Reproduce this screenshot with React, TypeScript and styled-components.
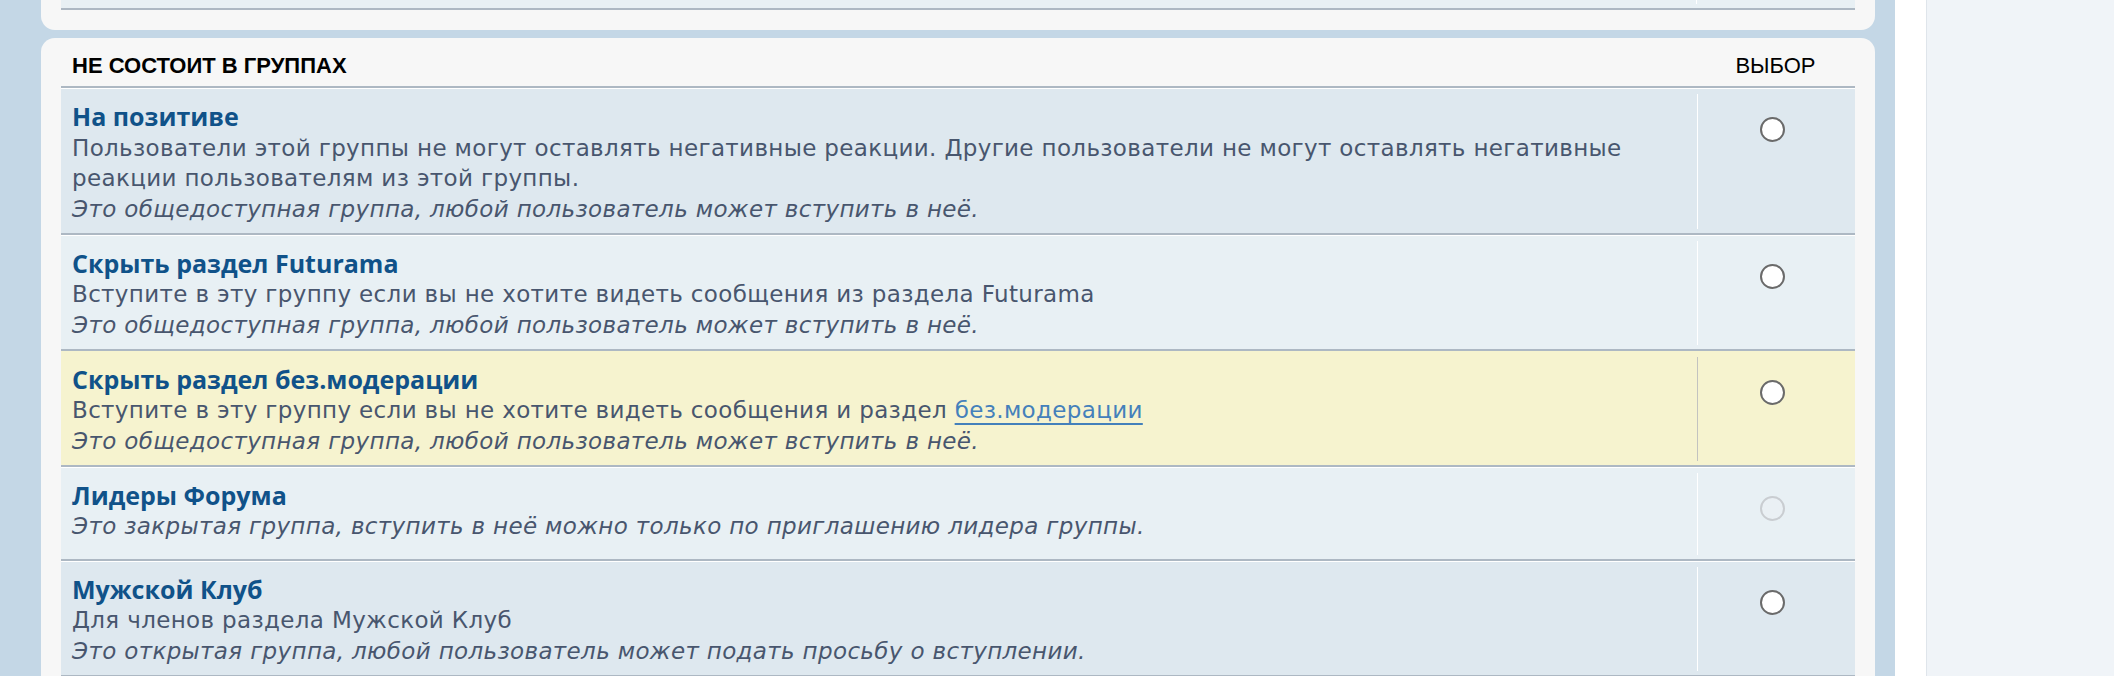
import React from 'react';
import styled, { createGlobalStyle } from 'styled-components';

const Global = createGlobalStyle`
  html, body { margin: 0; padding: 0; }
  body { background: #ffffff; font-family: "DejaVu Sans", Verdana, sans-serif; }
`;

const Page = styled.div`
  display: flex;
  width: 2114px;
  height: 676px;
  overflow: hidden;
`;

const Main = styled.div`
  width: 1895px;
  flex: none;
  box-sizing: border-box;
  background: #c4d7e6;
  padding: 0 20px 0 41px;
  display: flex;
  flex-direction: column;
  gap: 8px;
`;

const Gutter = styled.div`
  width: 31px;
  flex: none;
  background: #ffffff;
`;

const Sidebar = styled.aside`
  flex: 1;
  background: #f0f4f8;
  border-left: 1px solid #dfe5eb;
`;

const Panel = styled.section<{ $top?: boolean }>`
  background: #f7f7f7;
  padding: ${p => (p.$top ? '0 20px 20px' : '0 20px')};
  border-radius: ${p => (p.$top ? '0 0 14px 14px' : '14px 14px 0 0')};
  flex: ${p => (p.$top ? 'none' : '1')};
`;

const StubRow = styled.div`
  display: flex;
  height: 8px;
  background: #e8f0f4;
  border-bottom: 2px solid #adb8c3;
`;

const StubCell = styled.div`
  margin-left: auto;
  width: 158px;
  margin-bottom: 4px;
  border-left: 1px solid #ffffff;
`;

const Header = styled.div`
  display: flex;
  padding-top: 8px;
  height: 40px;
  line-height: 40px;
  border-bottom: 2px solid #adb8c3;
  font-family: "Liberation Sans", Arial, sans-serif;
  font-size: 22px;
  color: #000000;
  text-transform: uppercase;
`;

const HeaderTitle = styled.div`
  flex: 1;
  padding-left: 11px;
  font-weight: bold;
`;

const HeaderChoice = styled.div`
  width: 159px;
  text-align: center;
`;

const List = styled.ul`
  list-style: none;
  margin: 0;
  padding: 0;
`;

const Row = styled.li<{ $bg: string; $hover?: boolean }>`
  display: flex;
  background: ${p => p.$bg};
  border-top: 1px solid ${p => (p.$hover ? p.$bg : '#ffffff')};
  border-bottom: 2px solid #adb8c3;
`;

const Info = styled.div`
  flex: 1;
  padding: 14px 11px 8.5px;
  color: #48566e;
  font-size: 23px;
  letter-spacing: 0.35px;
  line-height: 30.5px;
`;

const Title = styled.a`
  display: block;
  margin-bottom: 2.5px;
  font-family: "Open Sans", "Liberation Sans", sans-serif;
  font-weight: 700;
  font-size: 25px;
  letter-spacing: 0;
  line-height: 27px;
  color: #105289;
  text-decoration: none;
`;

const Desc = styled.div``;

const Note = styled.div`
  font-style: italic;
`;

const Link = styled.a`
  color: #4480bb;
  text-decoration: underline;
  text-decoration-thickness: 2px;
  text-underline-offset: 5px;
`;

const Choice = styled.div<{ $hover?: boolean }>`
  width: 158px;
  box-sizing: border-box;
  min-height: 82px;
  margin: 5px 0 4px;
  padding: 23px 8px 0 0;
  border-left: 1px solid ${p => (p.$hover ? '#c3c3c0' : '#ffffff')};
  display: flex;
  justify-content: center;
  align-items: flex-start;
`;

const Radio = styled.input`
  appearance: none;
  margin: 0;
  width: 25px;
  height: 25px;
  border-radius: 50%;
  box-sizing: border-box;
  border: 2px solid #6a6a6a;
  background: #ffffff;
  &:disabled {
    border-color: #c9cdd1;
    background: #eaf0f4;
  }
`;

type Group = {
  title: string;
  desc?: React.ReactNode;
  note: string;
  bg: string;
  hover?: boolean;
  disabled?: boolean;
};

const PUBLIC = 'Это общедоступная группа, любой пользователь может вступить в неё.';

const groups: Group[] = [
  {
    title: 'На позитиве',
    desc: 'Пользователи этой группы не могут оставлять негативные реакции. Другие пользователи не могут оставлять негативные реакции пользователям из этой группы.',
    note: PUBLIC,
    bg: '#dee8ef',
  },
  {
    title: 'Скрыть раздел Futurama',
    desc: 'Вступите в эту группу если вы не хотите видеть сообщения из раздела Futurama',
    note: PUBLIC,
    bg: '#e8f0f4',
  },
  {
    title: 'Скрыть раздел без.модерации',
    desc: (
      <>
        Вступите в эту группу если вы не хотите видеть сообщения и раздел <Link href="#">без.модерации</Link>
      </>
    ),
    note: PUBLIC,
    bg: '#f6f3cf',
    hover: true,
  },
  {
    title: 'Лидеры Форума',
    note: 'Это закрытая группа, вступить в неё можно только по приглашению лидера группы.',
    bg: '#e8f0f4',
    disabled: true,
  },
  {
    title: 'Мужской Клуб',
    desc: 'Для членов раздела Мужской Клуб',
    note: 'Это открытая группа, любой пользователь может подать просьбу о вступлении.',
    bg: '#dee8ef',
  },
];

export default function App() {
  return (
    <>
      <Global />
      <Page>
        <Main>
          <Panel $top>
            <StubRow>
              <StubCell />
            </StubRow>
          </Panel>
          <Panel>
            <Header>
              <HeaderTitle>Не состоит в группах</HeaderTitle>
              <HeaderChoice>Выбор</HeaderChoice>
            </Header>
            <List>
              {groups.map(g => (
                <Row key={g.title} $bg={g.bg} $hover={g.hover}>
                  <Info>
                    <Title href="#">{g.title}</Title>
                    {g.desc && <Desc>{g.desc}</Desc>}
                    <Note>{g.note}</Note>
                  </Info>
                  <Choice $hover={g.hover}>
                    <Radio type="radio" name="group" disabled={g.disabled} />
                  </Choice>
                </Row>
              ))}
            </List>
          </Panel>
        </Main>
        <Gutter />
        <Sidebar />
      </Page>
    </>
  );
}
